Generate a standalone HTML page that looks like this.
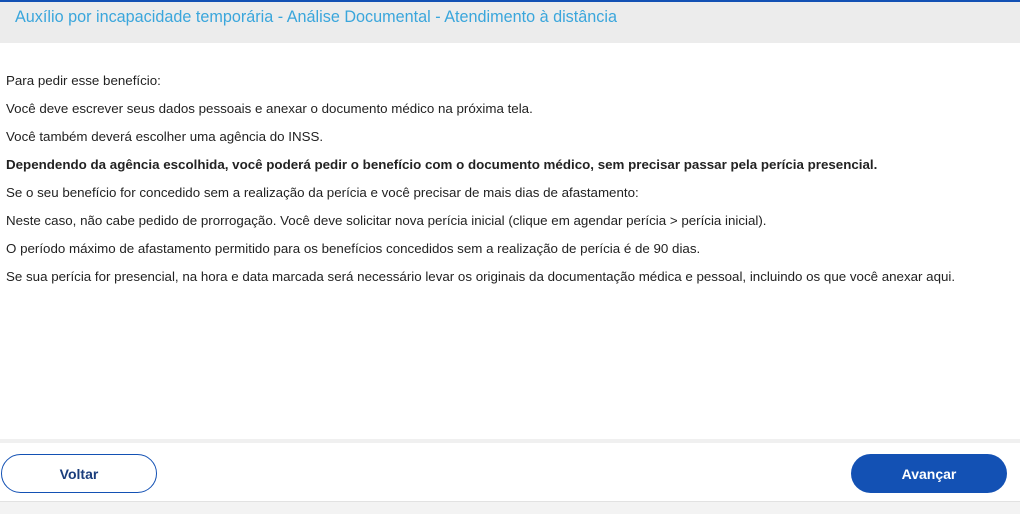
<!DOCTYPE html>
<html><head><style>
body{margin:0;width:1020px;height:513px;overflow:hidden;background:#fff;font-family:"Liberation Sans",sans-serif;position:relative}
.top{position:absolute;top:0;left:0;width:1020px;height:2px;background:#1351b4}
.hdr{position:absolute;top:2px;left:0;width:1020px;height:41px;background:#ececec}
.hdr span{position:absolute;left:15px;top:6px;font-size:16.2px;color:#3aa6dc}
.p{position:absolute;left:6px;font-size:13.34px;color:#222;white-space:nowrap}
.b{font-weight:bold;font-size:13.35px}
.sep{position:absolute;top:439px;left:0;width:1020px;height:4px;background:#f0f0f0}
.bot{position:absolute;top:501px;left:0;width:1020px;height:12px;background:#f3f3f3;border-top:1px solid #e2e2e2}
.btn{position:absolute;top:454px;height:39px;border-radius:20px;font-size:14px;font-weight:bold;display:flex;align-items:center;justify-content:center;box-sizing:border-box}
</style></head><body>
<div class="top"></div>
<div class="hdr"><span>Auxílio por incapacidade temporária - Análise Documental - Atendimento à distância</span></div>
<div class="p" style="top:73px">Para pedir esse benefício:</div>
<div class="p" style="top:101px">Você deve escrever seus dados pessoais e anexar o documento médico na próxima tela.</div>
<div class="p" style="top:129px">Você também deverá escolher uma agência do INSS.</div>
<div class="p b" style="top:157px">Dependendo da agência escolhida, você poderá pedir o benefício com o documento médico, sem precisar passar pela perícia presencial.</div>
<div class="p" style="top:185px">Se o seu benefício for concedido sem a realização da perícia e você precisar de mais dias de afastamento:</div>
<div class="p" style="top:213px">Neste caso, não cabe pedido de prorrogação. Você deve solicitar nova perícia inicial (clique em agendar perícia &gt; perícia inicial).</div>
<div class="p" style="top:241px">O período máximo de afastamento permitido para os benefícios concedidos sem a realização de perícia é de 90 dias.</div>
<div class="p" style="top:269px">Se sua perícia for presencial, na hora e data marcada será necessário levar os originais da documentação médica e pessoal, incluindo os que você anexar aqui.</div>
<div class="sep"></div>
<div class="btn" style="left:1px;width:156px;border:1px solid #1351b4;color:#1a3d7c">Voltar</div>
<div class="btn" style="left:851px;width:156px;background:#1351b4;color:#fff">Avançar</div>
<div class="bot"></div>
</body></html>
